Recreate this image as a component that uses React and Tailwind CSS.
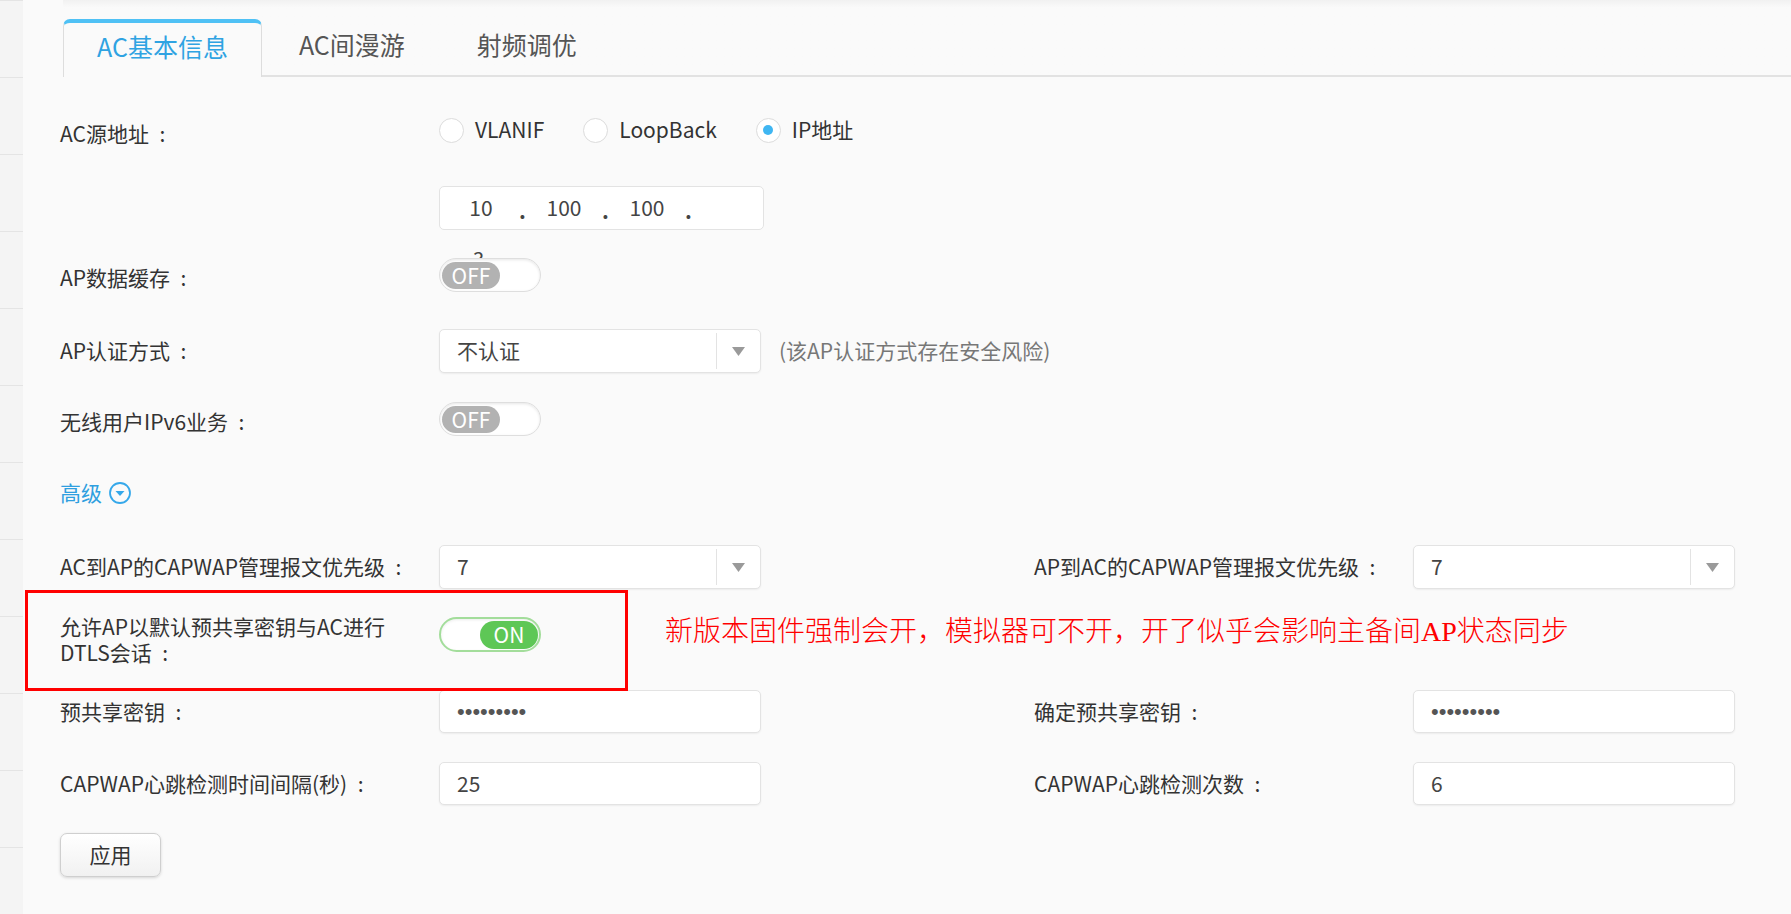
import React from 'react';

const font = "font-['Noto_Sans_CJK_SC','Noto_Sans',sans-serif]";
const colon = '\u2002:';

function Label({ children, className = '' }) {
  return <div className={`w-[379px] shrink-0 text-[21px] text-[#333] ${className}`}>{children}</div>;
}

function Toggle({ on }) {
  if (on) {
    return (
      <div className="relative z-10 flex h-[35px] w-[102px] items-center justify-end rounded-full border-2 border-[#a3dd9b] bg-white pr-[1px] shadow-[inset_0_1px_3px_rgba(0,0,0,0.08)]">
        <span className="flex h-[28px] w-[58px] items-center justify-center rounded-full bg-[#5ec756] text-[21px] leading-none text-white">ON</span>
      </div>
    );
  }
  return (
    <div className="relative z-10 flex h-[34px] w-[102px] items-center rounded-full border border-[#dedede] bg-white pl-[2px] shadow-[inset_0_1px_3px_rgba(0,0,0,0.1)]">
      <span className="flex h-[27px] w-[58px] items-center justify-center rounded-full bg-[#b2b2b2] text-[21px] leading-none text-white">OFF</span>
    </div>
  );
}

function Select({ value }) {
  return (
    <div className="flex h-[44px] w-[322px] items-stretch rounded-[5px] border border-[#e3e3e3] bg-white shadow-[0_1px_2px_rgba(0,0,0,0.06)]">
      <div className="flex flex-1 items-center pl-[17px] text-[21px] text-[#444]">{value}</div>
      <div className="my-[3px] w-px bg-[#e3e3e3]" />
      <div className="flex w-[43px] items-center justify-center">
        <svg width="13" height="9" viewBox="0 0 13 9">
          <polygon points="0,0 13,0 6.5,9" fill="#9a9a9a" />
        </svg>
      </div>
    </div>
  );
}

function Input({ value, password }) {
  return (
    <div className="flex h-[43px] w-[322px] items-center rounded-[5px] border border-[#e3e3e3] bg-white pl-[17px] shadow-[0_1px_2px_rgba(0,0,0,0.06)]">
      {password ? (
        <span className="font-['Liberation_Sans',sans-serif] text-[22px] text-[#555]">•••••••••</span>
      ) : (
        <span className="text-[21px] text-[#444]">{value}</span>
      )}
    </div>
  );
}

function Radio({ checked, label }) {
  return (
    <div className="flex items-center gap-[11px]">
      <span className="flex h-[25px] w-[25px] items-center justify-center rounded-full border border-[#dcdcdc] bg-white">
        {checked && <span className="h-[10px] w-[10px] rounded-full bg-[#3fb6f2]" />}
      </span>
      <span className="text-[21px] text-[#333]">{label}</span>
    </div>
  );
}

export default function App() {
  const strip = Array.from({ length: 12 });
  return (
    <div className={`relative flex h-[914px] w-full overflow-hidden bg-[#fafafa] ${font}`}>
      {/* left strip */}
      <div className="flex w-[23px] shrink-0 flex-col bg-[#f4f4f4]">
        <div className="h-[2px] border-b border-[#e4e4e4]" />
        {strip.map((_, i) => (
          <div key={i} className="h-[77px] shrink-0 border-b border-[#e4e4e4]" />
        ))}
      </div>

      <div className="flex flex-1 flex-col pl-[37px]">
        {/* tabs */}
        <div className="ml-[3px] flex h-[77px] items-end border-b-2 border-[#e2e2e2] bg-gradient-to-b from-[#f1f1f1] to-[#fafafa] to-[10%]">
          <div className="-mb-[2px] flex h-[58px] items-center rounded-t-[7px] border-x border-t-4 border-x-[#dddddd] border-t-[#4fc1f5] bg-[#fafafa] px-[33px] pb-[6px] text-[25px] text-[#2fa3e2]">
            AC基本信息
          </div>
          <div className="flex h-[56px] items-center px-[37px] pb-[4px] text-[25px] text-[#555]">AC间漫游</div>
          <div className="flex h-[56px] items-center px-[35px] pb-[4px] text-[25px] text-[#555]">射频调优</div>
        </div>

        {/* AC源地址 */}
        <div className="mt-[33px] flex h-[40px] items-center">
          <Label className="pt-[8px]">AC源地址{colon}</Label>
          <div className="flex items-center gap-[39px]">
            <Radio label="VLANIF" />
            <Radio label="LoopBack" />
            <Radio label="IP地址" checked />
          </div>
        </div>

        <div className="mt-[36px] flex h-[44px] items-center">
          <Label />
          <div className="relative flex h-[44px] w-[325px] items-center rounded-[5px] border border-[#e3e3e3] bg-white pl-[10px] text-[21px] text-[#444]">
            <span className="w-[62px] text-center">10</span>
            <span className="w-[21px] pt-[6px] text-center font-bold">.</span>
            <span className="w-[62px] text-center">100</span>
            <span className="w-[21px] pt-[6px] text-center font-bold">.</span>
            <span className="w-[62px] text-center">100</span>
            <span className="w-[21px] pt-[6px] text-center font-bold">.</span>
            <span className="absolute left-[33px] top-[62px] text-[20px] leading-[20px] text-[#444]">3</span>
          </div>
        </div>

        <div className="mt-[28px] flex h-[34px] items-center">
          <Label className="pt-[6px]">AP数据缓存{colon}</Label>
          <Toggle />
        </div>

        <div className="mt-[37px] flex h-[44px] items-center">
          <Label>AP认证方式{colon}</Label>
          <Select value="不认证" />
          <span className="ml-[18px] text-[21px] text-[#777]">(该AP认证方式存在安全风险)</span>
        </div>

        <div className="mt-[29px] flex h-[34px] items-center">
          <Label className="pt-[6px]">无线用户IPv6业务{colon}</Label>
          <Toggle />
        </div>

        <div className="mt-[42px] flex h-[30px] items-center gap-[6px] text-[21px] text-[#2f9fe0]">
          <span>高级</span>
          <svg width="24" height="24" viewBox="0 0 24 24">
            <circle cx="12" cy="12" r="10" fill="none" stroke="#35a8ea" strokeWidth="1.8" />
            <polygon points="7.5,10 16.5,10 12,15" fill="#35a8ea" />
          </svg>
        </div>

        <div className="mt-[37px] flex h-[44px] items-center">
          <Label>AC到AP的CAPWAP管理报文优先级{colon}</Label>
          <Select value="7" />
          <div className="w-[273px]" />
          <Label>AP到AC的CAPWAP管理报文优先级{colon}</Label>
          <Select value="7" />
        </div>

        <div className="mt-[24px] flex h-[52px] items-start">
          <Label className="leading-[26px]">
            允许AP以默认预共享密钥与AC进行
            <br />
            DTLS会话{colon}
          </Label>
          <div className="mt-[4px]">
            <Toggle on />
          </div>
        </div>

        <div className="mt-[25px] flex h-[43px] items-center">
          <Label>预共享密钥{colon}</Label>
          <Input password />
          <div className="w-[273px]" />
          <Label>确定预共享密钥{colon}</Label>
          <Input password />
        </div>

        <div className="mt-[29px] flex h-[43px] items-center">
          <Label>CAPWAP心跳检测时间间隔(秒){colon}</Label>
          <Input value="25" />
          <div className="w-[273px]" />
          <Label>CAPWAP心跳检测次数{colon}</Label>
          <Input value="6" />
        </div>

        <div className="mt-[28px]">
          <button className="flex h-[44px] w-[101px] items-center justify-center rounded-[7px] border border-[#cfcfcf] bg-gradient-to-b from-white to-[#f1f1f1] text-[21px] text-[#333] shadow-[0_1px_3px_rgba(0,0,0,0.15)]">
            应用
          </button>
        </div>
      </div>

      {/* annotation */}
      <div className="pointer-events-none absolute left-[25px] top-[590px] h-[101px] w-[603px] border-[3px] border-[#ff0000]" />
      <div className="pointer-events-none absolute left-[665px] top-[612px] font-['Liberation_Serif','Noto_Sans_CJK_SC',serif] text-[28px] font-light leading-[40px] text-[#ff0000]">
        新版本固件强制会开，模拟器可不开，开了似乎会影响主备间AP状态同步
      </div>
    </div>
  );
}
